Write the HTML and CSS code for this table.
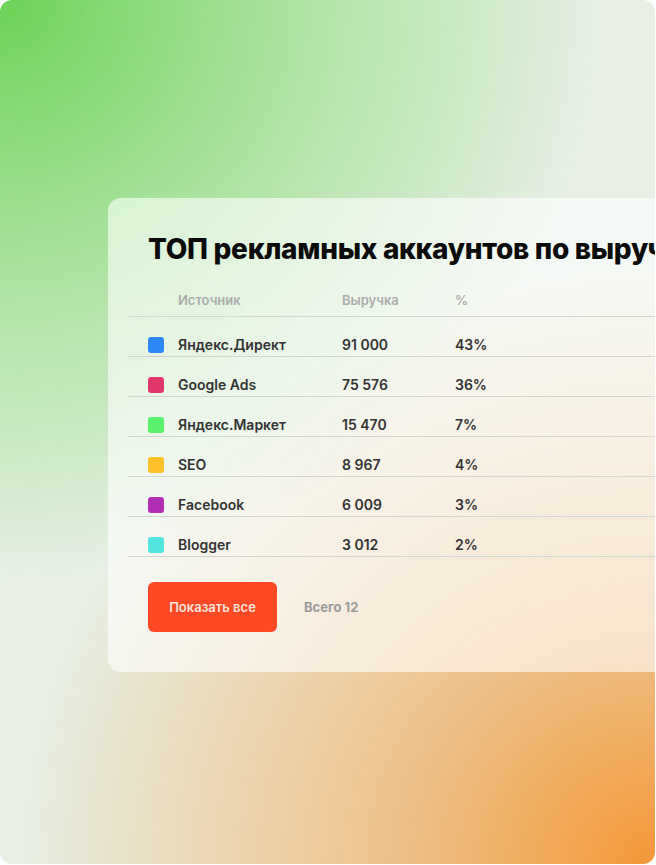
FILE: index.html
```html
<!DOCTYPE html>
<html lang="ru">
<head>
<meta charset="utf-8">
<link rel="stylesheet" href="styles.css">
</head>
<body>
<div class="frame">
  <div class="card">
    <h1 class="title">ТОП рекламных аккаунтов по выручке</h1>
    <div class="table">
      <div class="row head">
        <span></span><span>Источник</span><span>Выручка</span><span>%</span>
      </div>
      <div class="row"><span class="sw blue"></span><span>Яндекс.Директ</span><span>91 000</span><span>43%</span></div>
      <div class="row"><span class="sw pink"></span><span>Google Ads</span><span>75 576</span><span>36%</span></div>
      <div class="row"><span class="sw green"></span><span>Яндекс.Маркет</span><span>15 470</span><span>7%</span></div>
      <div class="row"><span class="sw yellow"></span><span>SEO</span><span>8 967</span><span>4%</span></div>
      <div class="row"><span class="sw purple"></span><span>Facebook</span><span>6 009</span><span>3%</span></div>
      <div class="row"><span class="sw cyan"></span><span>Blogger</span><span>3 012</span><span>2%</span></div>
    </div>
    <div class="footer">
      <button class="btn">Показать все</button>
      <span class="total">Всего 12</span>
    </div>
  </div>
</div>
</body>
</html>
```
FILE: styles.css
```css
html, body {
  margin: 0;
  padding: 0;
  background: #ffffff;
}
body {
  font-family: Inter, "Noto Sans", sans-serif;
}
.frame {
  width: 655px;
  height: 864px;
  border-radius: 12px;
  overflow: hidden;
  box-sizing: border-box;
  padding: 198px 0 0 108px;
  background:
    radial-gradient(ellipse 600px 580px at 0 0, rgba(108, 211, 86, 1) 0%, rgba(108, 211, 86, 0.55) 40%, rgba(108, 211, 86, 0) 100%),
    radial-gradient(ellipse 640px 600px at 100% 100%, rgba(243, 152, 56, 1) 0%, rgba(243, 152, 56, 0.55) 38%, rgba(243, 152, 56, 0) 100%),
    #e7efe5;
}
.card {
  width: 640px;
  box-sizing: border-box;
  padding: 34px 0 40px 40px;
  border-radius: 13px;
  background: rgba(255, 255, 255, 0.6);
}
.title {
  margin: 0;
  font-size: 28px;
  line-height: 34px;
  font-weight: 800;
  color: #0b0b0b;
  white-space: nowrap;
  letter-spacing: -0.3px;
}
.table {
  margin-top: 19px;
  margin-left: -20px;
}
.row {
  display: grid;
  grid-template-columns: 20px 16px 14px 164px 113px 1fr;
  grid-template-areas: "pad sw gap name rev pct";
  align-items: center;
  padding: 20px 0 3px;
  border-bottom: 1px solid #d3d6d0;
  font-size: 14px;
  line-height: 16px;
  font-weight: 600;
  color: #333333;
}
.row > span:nth-child(1) { grid-area: sw; }
.row > span:nth-child(2) { grid-area: name; }
.row > span:nth-child(3) { grid-area: rev; }
.row > span:nth-child(4) { grid-area: pct; }
.row.head {
  padding: 7px 0 8px;
  color: #ababab;
  font-size: 13px;
  font-weight: 600;
}
.sw {
  width: 16px;
  height: 16px;
  border-radius: 3px;
}
.blue { background: #2d87f7; }
.pink { background: #e0386a; }
.green { background: #5af06c; }
.yellow { background: #fdc12a; }
.purple { background: #b22fb3; }
.cyan { background: #52e5df; }
.footer {
  display: flex;
  align-items: center;
  gap: 27px;
  margin-top: 25px;
}
.btn {
  width: 129px;
  height: 50px;
  border: none;
  border-radius: 6px;
  background: #ff4824;
  color: #fde3dc;
  font-family: Inter, "Noto Sans", sans-serif;
  font-size: 13px;
  font-weight: 600;
  padding: 0;
}
.total {
  font-size: 13px;
  font-weight: 700;
  color: #9a9a9a;
}
```
